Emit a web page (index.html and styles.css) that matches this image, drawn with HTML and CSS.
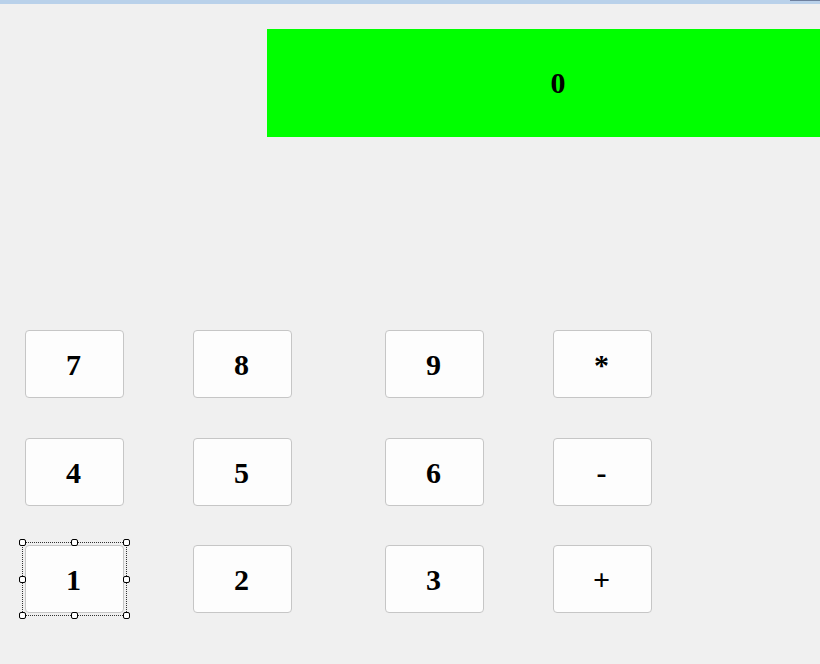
FILE: index.html
```html
<!DOCTYPE html>
<html>
<head>
<meta charset="utf-8">
<link rel="stylesheet" href="styles.css">
</head>
<body>
<div class="titlebar"><span class="titlebar-mark"></span></div>
<div class="display">0</div>
<div class="keypad">
  <button class="key">7</button>
  <button class="key">8</button>
  <button class="key">9</button>
  <button class="key">*</button>
  <button class="key">4</button>
  <button class="key">5</button>
  <button class="key">6</button>
  <button class="key">-</button>
  <button class="key selected">1
    <span class="sel-frame"></span>
    <span class="handle h-tl"></span><span class="handle h-tm"></span><span class="handle h-tr"></span>
    <span class="handle h-ml"></span><span class="handle h-mr"></span>
    <span class="handle h-bl"></span><span class="handle h-bm"></span><span class="handle h-br"></span>
  </button>
  <button class="key">2</button>
  <button class="key">3</button>
  <button class="key">+</button>
</div>
</body>
</html>
```
FILE: styles.css
```css
html, body {
  margin: 0;
  padding: 0;
  background: #f0f0f0;
  width: 820px;
  height: 664px;
  overflow: hidden;
  font-family: "Liberation Serif", "Times New Roman", serif;
}
.titlebar {
  height: 4px;
  background: #b9d1ea;
  display: flex;
  justify-content: flex-end;
}
.titlebar-mark {
  width: 30px;
  height: 1px;
  background: #6f819f;
}
.display {
  margin: 25px 0 0 267px;
  width: 582px;
  height: 108px;
  background: #00ff00;
  display: flex;
  align-items: center;
  justify-content: center;
  font-weight: bold;
  font-size: 30px;
  color: #000;
}
.keypad {
  margin: 193px 0 0 25px;
  display: grid;
  grid-template-columns: 168px 192px 168px 99px;
  grid-template-rows: 108px 107px 68px;
  align-items: start;
  justify-items: start;
}
.key {
  position: relative;
  width: 99px;
  height: 68px;
  margin: 0;
  padding: 1px 2px 0 0;
  background: #fdfdfd;
  border: 1px solid #c6c6c6;
  border-radius: 4px;
  font-family: "Liberation Serif", "Times New Roman", serif;
  font-weight: bold;
  font-size: 30px;
  color: #000;
  display: flex;
  align-items: center;
  justify-content: center;
  box-sizing: border-box;
}
.sel-frame {
  position: absolute;
  left: -4px;
  top: -4px;
  width: 105px;
  height: 74px;
  box-sizing: border-box;
  border: 1px dotted #333;
}
.handle {
  position: absolute;
  width: 7px;
  height: 7px;
  box-sizing: border-box;
  border: 1px solid #000;
  background: #fff;
  border-radius: 2px;
}
.h-tl { left: -7px; top: -7px; }
.h-tm { left: 45px; top: -7px; }
.h-tr { left: 97px; top: -7px; }
.h-ml { left: -7px; top: 30px; }
.h-mr { left: 97px; top: 30px; }
.h-bl { left: -7px; top: 66px; }
.h-bm { left: 45px; top: 66px; }
.h-br { left: 97px; top: 66px; }
```
